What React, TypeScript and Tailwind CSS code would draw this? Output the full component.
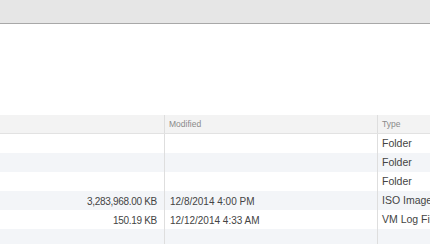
import React from "react";

const rows = [
  { size: "", mod: "", type: "Folder" },
  { size: "", mod: "", type: "Folder" },
  { size: "", mod: "", type: "Folder" },
  { size: "3,283,968.00 KB", mod: "12/8/2014 4:00 PM", type: "ISO Image" },
  { size: "150.19 KB", mod: "12/12/2014 4:33 AM", type: "VM Log File" },
  { size: "", mod: "", type: "" },
];

export default function App() {
  return (
    <div className="w-[430px] h-[244px] overflow-hidden bg-white" style={{ fontFamily: '"Liberation Sans", Arial, sans-serif' }}>
      <div className="h-[24px] bg-[#e6e6e6] border-b border-[#a8a8a8]" />
      <div className="h-[91px]" />
      <div className="flex h-[19px] bg-[#f3f3f3] border-b border-[#e2e2e2] text-[8.5px] text-[#8a8a8a]">
        <div className="w-[165px] shrink-0 border-r border-[#dedede]" />
        <div className="w-[213px] shrink-0 border-r border-[#dedede] flex items-center pl-[4px]">Modified</div>
        <div className="flex-1 flex items-center pl-[4px] whitespace-nowrap">Type</div>
      </div>
      {rows.map((r, i) => (
        <div key={i} className={`flex h-[19px] text-[10px] text-[#444] ${i % 2 === 1 ? "bg-[#f3f5f8]" : "bg-white"}`}>
          <div className="w-[165px] shrink-0 border-r border-[#dedede] flex items-center justify-end pr-[7px] pt-px whitespace-nowrap tracking-[-0.3px]">{r.size}</div>
          <div className="w-[213px] shrink-0 border-r border-[#dedede] flex items-center pl-[5px] pt-px whitespace-nowrap">{r.mod}</div>
          <div className="flex-1 flex items-center pl-[4px] pt-px whitespace-nowrap overflow-hidden text-[10.5px]">{r.type}</div>
        </div>
      ))}
    </div>
  );
}
